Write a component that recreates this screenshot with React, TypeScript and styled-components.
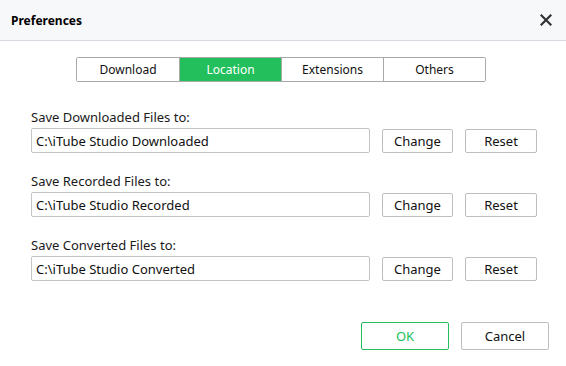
import React, { useState } from 'react';
import styled, { createGlobalStyle } from 'styled-components';

const GlobalStyle = createGlobalStyle`
  html, body {
    margin: 0;
    padding: 0;
    background: #ffffff;
  }

  body {
    font-family: 'Noto Sans', 'Open Sans', sans-serif;
    color: #111111;
  }

  * {
    box-sizing: border-box;
  }
`;

const TABS = ['Download', 'Location', 'Extensions', 'Others'];

const FOLDERS = [
  { label: 'Save Downloaded Files to:', path: 'C:\\iTube Studio Downloaded' },
  { label: 'Save Recorded Files to:', path: 'C:\\iTube Studio Recorded' },
  { label: 'Save Converted Files to:', path: 'C:\\iTube Studio Converted' },
];

const App = () => {
  const [activeTab, setActiveTab] = useState('Location');

  return (
    <>
      <GlobalStyle />
      <Dialog>
        <TitleBar>
          <Title>Preferences</Title>
          <CloseButton aria-label="Close">
            <svg width="12" height="12" viewBox="0 0 12 12">
              <path
                d="M1.5 1.5 L10.5 10.5 M10.5 1.5 L1.5 10.5"
                stroke="#333"
                strokeWidth="2.2"
                strokeLinecap="square"
              />
            </svg>
          </CloseButton>
        </TitleBar>

        <Body>
          <Tabs>
            {TABS.map((tab) => (
              <Tab
                key={tab}
                $active={tab === activeTab}
                onClick={() => setActiveTab(tab)}
              >
                {tab}
              </Tab>
            ))}
          </Tabs>

          <Form>
            {FOLDERS.map((folder) => (
              <Section key={folder.label}>
                <Label>{folder.label}</Label>
                <Row>
                  <PathInput defaultValue={folder.path} />
                  <Button $width={71}>Change</Button>
                  <Button $width={72}>Reset</Button>
                </Row>
              </Section>
            ))}
          </Form>

          <Footer>
            <FooterButton $primary>OK</FooterButton>
            <FooterButton>Cancel</FooterButton>
          </Footer>
        </Body>
      </Dialog>
    </>
  );
};

const Dialog = styled.div`
  width: 566px;
  height: 366px;
  background: #ffffff;
  display: flex;
  flex-direction: column;
`;

const TitleBar = styled.div`
  display: flex;
  align-items: center;
  justify-content: space-between;

  height: 41px;
  padding: 0 13px 0 11px;

  background: #f6f8fa;
  border-bottom: 1px solid #d6dbe1;
`;

const Title = styled.span`
  font-size: 12px;
  font-weight: 700;
  color: #000000;
`;

const CloseButton = styled.button`
  display: flex;
  align-items: center;
  justify-content: center;

  width: 14px;
  height: 14px;
  padding: 0;

  background: none;
  border: none;
  cursor: pointer;
`;

const Body = styled.div`
  flex: 1;
  display: flex;
  flex-direction: column;
`;

const Tabs = styled.div`
  display: flex;
  align-self: center;

  margin-top: 16px;
  margin-left: -4px;

  border: 1px solid #a9a9a9;
  border-radius: 2px;
`;

const Tab = styled.button<{ $active?: boolean }>`
  width: 102px;
  height: 23px;
  padding: 0;

  font-family: inherit;
  font-size: 12px;
  color: ${({ $active }) => ($active ? '#ffffff' : '#111111')};

  background: ${({ $active }) => ($active ? '#22bf5c' : '#ffffff')};
  border: none;
  border-left: 1px solid #a9a9a9;
  cursor: pointer;

  &:first-child {
    border-left: none;
  }
`;

const Form = styled.div`
  display: flex;
  flex-direction: column;
  gap: 20px;

  margin-top: 27px;
  padding: 0 29px 0 31px;
`;

const Section = styled.div`
  display: flex;
  flex-direction: column;
  gap: 3px;
`;

const Label = styled.span`
  height: 16px;
  font-size: 13px;
  line-height: 16px;
  color: #1a1a1a;
`;

const Row = styled.div`
  display: flex;
  align-items: center;
  gap: 12px;
`;

const PathInput = styled.input`
  flex: 1;
  height: 25px;
  padding: 0 4px;

  font-family: inherit;
  font-size: 13px;
  color: #111111;

  border: 1px solid #c4c4c4;
  border-radius: 2px;
  outline: none;
`;

const Button = styled.button<{ $width: number }>`
  width: ${({ $width }) => $width}px;
  height: 24px;
  padding: 0;

  font-family: inherit;
  font-size: 13px;
  color: #111111;

  background: #ffffff;
  border: 1px solid #bdbdbd;
  border-radius: 2px;
  cursor: pointer;
`;

const Footer = styled.div`
  display: flex;
  justify-content: flex-end;
  gap: 12px;

  margin-top: 41px;
  padding-right: 17px;
`;

const FooterButton = styled.button<{ $primary?: boolean }>`
  width: 88px;
  height: 28px;
  padding: 0;

  font-family: inherit;
  font-size: 13px;
  color: ${({ $primary }) => ($primary ? '#22bf5c' : '#111111')};

  background: #ffffff;
  border: 1px solid ${({ $primary }) => ($primary ? '#22bf5c' : '#bdbdbd')};
  border-radius: 2px;
  cursor: pointer;
`;

export default App;
